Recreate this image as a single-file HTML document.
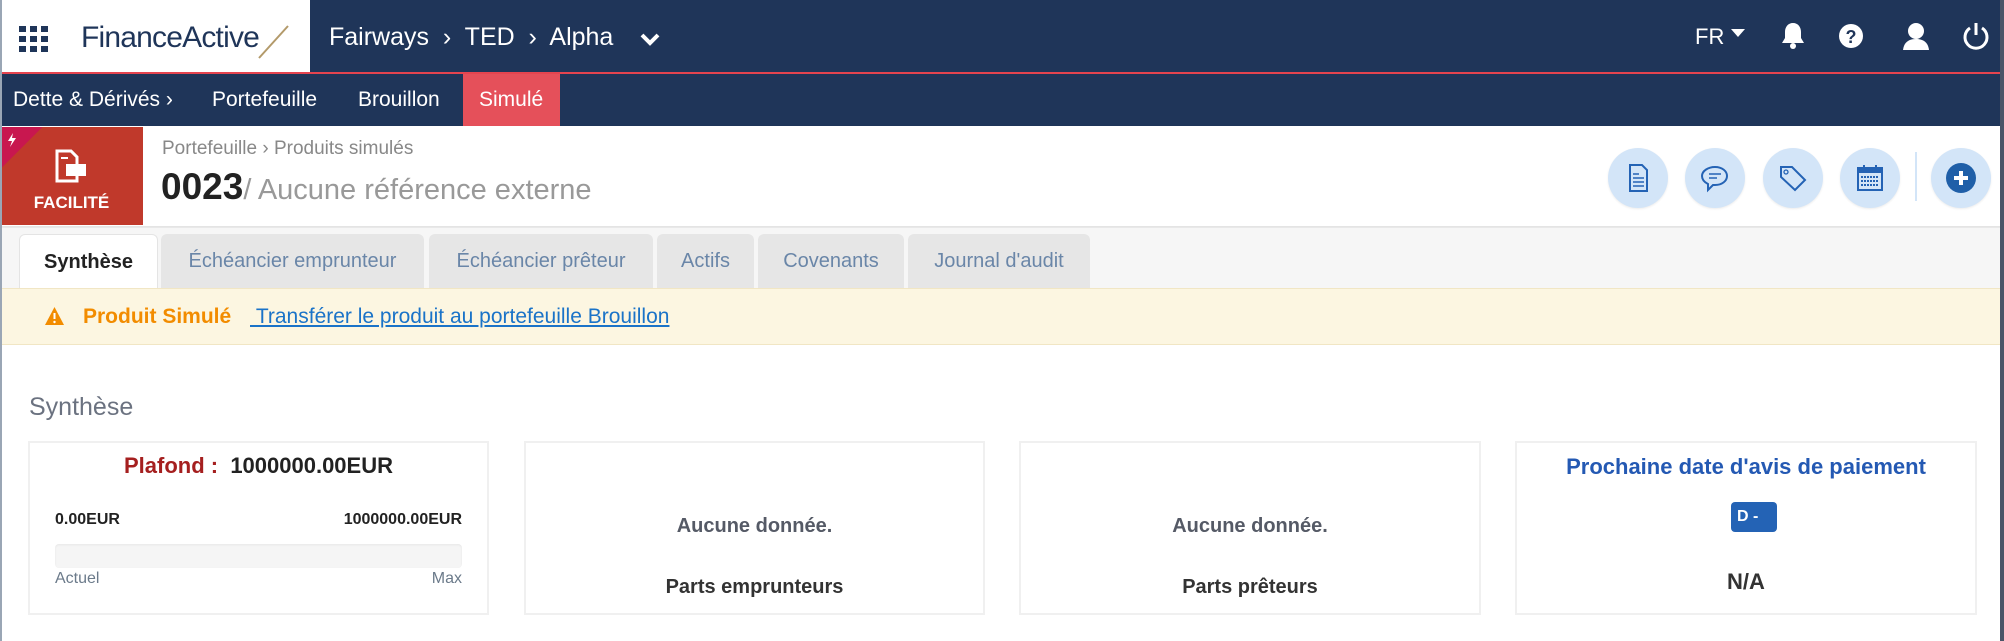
<!DOCTYPE html>
<html><head><meta charset="utf-8"><style>
*{margin:0;padding:0;box-sizing:border-box}
body{width:2004px;height:641px;overflow:hidden;background:#fff;font-family:"Liberation Sans",sans-serif;position:relative}
.a{position:absolute}
.top{left:0;top:0;width:2004px;height:72px;background:#1f3559}
.red{left:0;top:72px;width:2004px;height:2px;background:#e5444f}
.nav2{left:0;top:74px;width:2004px;height:52px;background:#1f3559}
.navt{color:#fff;font-size:21px;top:88px}
.circ{width:60px;height:60px;border-radius:50%;background:#d3e5f8;top:148px;box-shadow:0 1px 2px rgba(0,0,0,.08)}
.circ svg{position:absolute;left:15px;top:15px}
.tab{top:234px;height:55px;background:#e6e6e6;border-radius:6px 6px 0 0;color:#6a86a8;font-size:20px;text-align:center;line-height:54px}
.card{top:441px;height:174px;border:2px solid #f0f0f0;background:#fff}
</style></head><body>
<div class="a top"></div>
<div class="a" style="left:0;top:0;width:310px;height:72px;background:#fff;border-left:2px solid #9aa6b5"></div>
<svg class="a" style="left:19px;top:26px" width="30" height="27" viewBox="0 0 30 27"><g fill="#1f3559"><rect x="0" y="0" width="7" height="6"/><rect x="11" y="0" width="7" height="6"/><rect x="22" y="0" width="7" height="6"/><rect x="0" y="10" width="7" height="6"/><rect x="11" y="10" width="7" height="6"/><rect x="22" y="10" width="7" height="6"/><rect x="0" y="20" width="7" height="6"/><rect x="11" y="20" width="7" height="6"/><rect x="22" y="20" width="7" height="6"/></g></svg>
<div class="a" style="left:81px;top:21px;font-size:30px;color:#1f3559;letter-spacing:-0.8px">FinanceActive</div>
<svg class="a" style="left:257px;top:24px" width="34" height="36"><line x1="2" y1="34" x2="31" y2="2" stroke="#b39a6a" stroke-width="2"/></svg>
<div class="a" style="left:329px;top:23px;font-size:25px;color:#fff">Fairways&nbsp; ›&nbsp; TED&nbsp; ›&nbsp; Alpha</div>
<svg class="a" style="left:640px;top:32px" width="20" height="14"><path d="M2 3 L10 11 L18 3" stroke="#fff" stroke-width="4" fill="none"/></svg>
<div class="a" style="left:1695px;top:24px;font-size:22px;color:#fff">FR</div>
<svg class="a" style="left:1731px;top:29px" width="14" height="9"><path d="M0 0H14L7 8Z" fill="#fff"/></svg>
<svg class="a" style="left:1780px;top:22px" width="26" height="28" viewBox="0 0 26 28"><path d="M13 1c-5 0-8 4-8 9v6l-3 5h22l-3-5v-6c0-5-3-9-8-9z" fill="#fff"/><circle cx="13" cy="24" r="3" fill="#fff"/></svg>
<svg class="a" style="left:1839px;top:24px" width="24" height="24"><circle cx="12" cy="12" r="12" fill="#fff"/><text x="12" y="19" font-size="18" font-weight="bold" text-anchor="middle" fill="#1f3559" font-family="Liberation Sans">?</text></svg>
<svg class="a" style="left:1902px;top:22px" width="28" height="28"><circle cx="14" cy="9" r="8" fill="#fff"/><path d="M1 28c1-8 6-11 13-11s12 3 13 11z" fill="#fff"/></svg>
<svg class="a" style="left:1962px;top:22px" width="28" height="28"><path d="M8 6a11 11 0 1 0 12 0" stroke="#fff" stroke-width="3" fill="none"/><line x1="14" y1="1" x2="14" y2="13" stroke="#fff" stroke-width="3"/></svg>
<div class="a red"></div>
<div class="a nav2"></div>
<div class="a" style="left:463px;top:74px;width:97px;height:52px;background:#e5505a"></div>
<div class="a navt" style="left:13px">Dette &amp; Dérivés ›</div>
<div class="a navt" style="left:212px">Portefeuille</div>
<div class="a navt" style="left:358px">Brouillon</div>
<div class="a navt" style="left:479px">Simulé</div>
<div class="a" style="left:0;top:126px;width:2004px;height:100px;background:#fff;box-shadow:0 3px 4px rgba(0,0,0,.12)"></div>
<div class="a" style="left:0;top:127px;width:143px;height:98px;background:#c0392b;overflow:hidden">
<div style="position:absolute;left:-30px;top:-30px;width:60px;height:120px;background:#c8174f;transform:rotate(45deg);transform-origin:30px 30px"></div>
<svg style="position:absolute;left:7px;top:6px" width="10" height="14"><path d="M6 0L1 8H5L3 14L9 5H5Z" fill="#fff"/></svg>
<svg style="position:absolute;left:55px;top:22px" width="32" height="34"><path d="M2 2h14l6 6v24H2z" fill="none" stroke="#fff" stroke-width="3"/><rect x="11" y="15" width="20" height="12" fill="#fff"/><line x1="6" y1="9" x2="13" y2="9" stroke="#fff" stroke-width="2"/></svg>
<div style="position:absolute;left:0;width:143px;top:66px;text-align:center;color:#fff;font-size:17px;font-weight:bold">FACILITÉ</div>
</div>
<div class="a" style="left:162px;top:138px;font-size:19px;color:#888">Portefeuille › Produits simulés</div>
<div class="a" style="left:161px;top:166px;font-size:29px;color:#999"><b style="color:#222;font-size:37px">0023</b>/ Aucune référence externe</div>
<div class="a circ" style="left:1608px"><svg width="30" height="30"><path d="M7 2h12l5 5v21H7z" fill="none" stroke="#2463b5" stroke-width="2"/><path d="M10 11h6M10 15h11M10 19h11M10 23h11" stroke="#2463b5" stroke-width="1.6"/></svg></div>
<div class="a circ" style="left:1685px"><svg width="30" height="30"><path d="M15 4c7 0 12 4 12 9s-5 9-12 9h-2l-5 5v-6c-4-2-6-5-6-8 0-5 6-9 13-9z" fill="none" stroke="#2463b5" stroke-width="2"/><path d="M9 11h12M9 15h8" stroke="#2463b5" stroke-width="1.6"/></svg></div>
<div class="a circ" style="left:1763px"><svg width="30" height="30"><path d="M3 4h11l13 13-10 10L3 14z" fill="none" stroke="#2463b5" stroke-width="2"/><circle cx="8" cy="9" r="2" fill="none" stroke="#2463b5" stroke-width="1.3"/></svg></div>
<div class="a circ" style="left:1840px"><svg width="30" height="30"><rect x="3" y="5" width="24" height="22" fill="none" stroke="#2463b5" stroke-width="2"/><rect x="3" y="5" width="24" height="5" fill="#2463b5"/><path d="M9 2v6M21 2v6" stroke="#2463b5" stroke-width="2"/><path d="M6 14h18M6 18h18M6 22h18" stroke="#2463b5" stroke-width="2" stroke-dasharray="2 1"/></svg></div>
<div class="a" style="left:1915px;top:152px;width:2px;height:49px;background:#d3e5f8"></div>
<div class="a circ" style="left:1931px"><svg width="30" height="30"><circle cx="15" cy="15" r="15" fill="#1f5fa8"/><path d="M15 8v14M8 15h14" stroke="#fff" stroke-width="4"/></svg></div>
<div class="a" style="left:0;top:228px;width:2004px;height:61px;background:#f6f6f6"></div>
<div class="a tab" style="left:19px;width:139px;background:#fff;color:#222;font-weight:bold;border:1px solid #e4e4e4;border-bottom:none">Synthèse</div>
<div class="a tab" style="left:161px;width:263px">Échéancier emprunteur</div>
<div class="a tab" style="left:429px;width:224px">Échéancier prêteur</div>
<div class="a tab" style="left:657px;width:97px">Actifs</div>
<div class="a tab" style="left:758px;width:146px">Covenants</div>
<div class="a tab" style="left:908px;width:182px">Journal d'audit</div>
<div class="a" style="left:0;top:288px;width:2004px;height:57px;background:#fcf6e1;border-top:1px solid #f1e6c4;border-bottom:1px solid #f1e6c4"></div>
<svg class="a" style="left:45px;top:307px" width="19" height="18"><path d="M9.5 0L19 18H0Z" fill="#f28c00"/><path d="M9.5 6v6" stroke="#fff" stroke-width="2"/><circle cx="9.5" cy="15" r="1.2" fill="#fff"/></svg>
<div class="a" style="left:83px;top:305px;font-size:21px;font-weight:bold;color:#f28c00">Produit Simulé</div>
<div class="a" style="left:250px;top:305px;font-size:21px;color:#1a73c8;text-decoration:underline">&nbsp;Transférer le produit au portefeuille Brouillon</div>
<div class="a" style="left:29px;top:393px;font-size:25px;color:#6b7280">Synthèse</div>
<div class="a card" style="left:28px;width:461px">
<div style="position:absolute;top:10px;width:100%;text-align:center;font-size:22px;font-weight:bold;color:#222"><span style="color:#a51f1f">Plafond : </span>&nbsp;1000000.00EUR</div>
<div style="position:absolute;left:25px;top:68px;font-size:16px;font-weight:bold;color:#222">0.00EUR</div>
<div style="position:absolute;right:25px;top:68px;font-size:16px;font-weight:bold;color:#222">1000000.00EUR</div>
<div style="position:absolute;left:25px;right:25px;top:101px;height:24px;background:#f5f5f5;border-radius:4px;box-shadow:inset 0 1px 2px rgba(0,0,0,.06)"></div>
<div style="position:absolute;left:25px;top:127px;font-size:16px;color:#6b7a8a">Actuel</div>
<div style="position:absolute;right:25px;top:127px;font-size:16px;color:#6b7a8a">Max</div>
</div>
<div class="a card" style="left:524px;width:461px">
<div style="position:absolute;top:72px;width:100%;text-align:center;font-size:20px;font-weight:bold;color:#555a66">Aucune donnée.</div>
<div style="position:absolute;top:133px;width:100%;text-align:center;font-size:20px;font-weight:bold;color:#333">Parts emprunteurs</div>
</div>
<div class="a card" style="left:1019px;width:462px">
<div style="position:absolute;top:72px;width:100%;text-align:center;font-size:20px;font-weight:bold;color:#555a66">Aucune donnée.</div>
<div style="position:absolute;top:133px;width:100%;text-align:center;font-size:20px;font-weight:bold;color:#333">Parts prêteurs</div>
</div>
<div class="a card" style="left:1515px;width:462px">
<div style="position:absolute;top:11px;width:100%;text-align:center;font-size:22px;font-weight:bold;color:#2459b3">Prochaine date d'avis de paiement</div>
<div style="position:absolute;left:214px;top:59px;width:46px;height:30px;background:#2463b5;border-radius:4px;color:#fff;font-size:16px;font-weight:bold;padding:6px 0 0 6px">D -</div>
<div style="position:absolute;top:126px;width:100%;text-align:center;font-size:22px;font-weight:bold;color:#333">N/A</div>
</div>
<div class="a" style="left:0;top:0;width:2px;height:641px;background:#9aa6b5"></div>
<div class="a" style="left:2000px;top:0;width:4px;height:641px;background:#4a5568"></div>
</body></html>
